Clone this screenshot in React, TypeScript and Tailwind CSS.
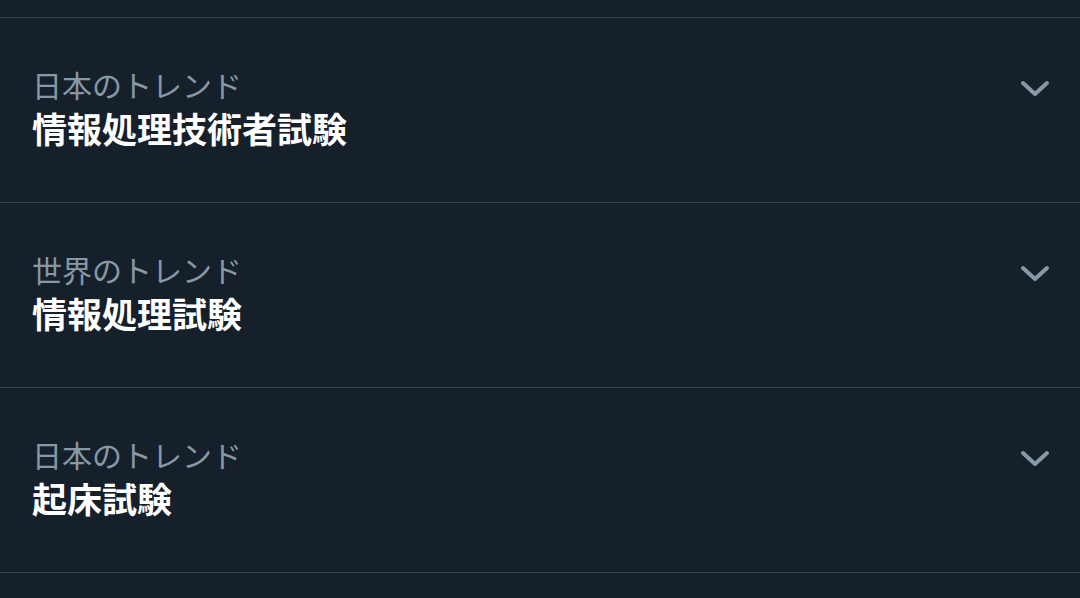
const trends = [
  { label: '日本のトレンド', title: '情報処理技術者試験' },
  { label: '世界のトレンド', title: '情報処理試験' },
  { label: '日本のトレンド', title: '起床試験' },
];

function Chevron() {
  return (
    <svg width="30" height="18" viewBox="0 0 30 18" fill="none" className="text-[#8899a6]">
      <path d="M3 3 L15 14 L27 3" stroke="currentColor" strokeWidth="4" strokeLinecap="round" strokeLinejoin="round" />
    </svg>
  );
}

export default function App() {
  return (
    <div
      className="h-[598px] w-[1080px] overflow-hidden bg-[#16202b]"
      style={{ fontFamily: '"Noto Sans CJK JP", "Noto Sans", sans-serif' }}
    >
      <div className="h-[17px] border-b border-[#38444d] box-content" />
      {trends.map((trend, i) => (
        <div key={i} className="flex h-[185px] items-start justify-between border-b border-[#38444d] pl-8 pr-[30px]">
          <div className="pt-[48px]">
            <div className="text-[30px] leading-[36px] text-[#8899a6]">{trend.label}</div>
            <div className="mt-[5px] text-[35px] font-bold leading-[42px] text-white">{trend.title}</div>
          </div>
          <div className="pt-[62px]">
            <Chevron />
          </div>
        </div>
      ))}
    </div>
  );
}
